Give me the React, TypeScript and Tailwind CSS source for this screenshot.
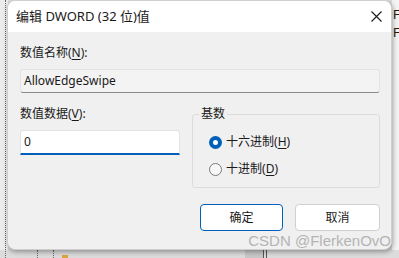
const font = { fontFamily: '"Noto Sans", "Noto Sans CJK SC", sans-serif' };

function Radio({ checked, label, hotkey }: { checked: boolean; label: string; hotkey: string }) {
  return (
    <div className="flex items-center gap-[4px] h-[16px]">
      {checked ? (
        <span className="flex h-[13px] w-[13px] items-center justify-center rounded-full bg-[#005fb8]">
          <span className="h-[5px] w-[5px] rounded-full bg-white" />
        </span>
      ) : (
        <span className="h-[13px] w-[13px] rounded-full border border-[#7a7a7a] bg-[#f7f7f7]" />
      )}
      <span className="text-[12px] leading-[16px] text-[#1a1a1a]">
        {label}(<span className="underline underline-offset-2">{hotkey}</span>)
      </span>
    </div>
  );
}

export default function App() {
  return (
    <div className="relative h-[258px] w-[399px] overflow-hidden bg-[#dcdcdc]" style={font}>
      {/* things behind the dialog */}
      <div className="absolute left-0 top-0 h-[250px] w-[8px] bg-[#ececec]" />
      <div className="absolute left-[5px] top-0 h-[258px] w-0 border-l border-dotted border-[#6a6a6a]" />
      <div className="absolute left-[37px] top-[250px] h-[8px] w-0 border-l border-dotted border-[#6a6a6a]" />
      <div className="absolute left-[53px] top-[250px] h-[8px] w-0 border-l border-dotted border-[#6a6a6a]" />
      <div className="absolute left-[62px] top-[255px] h-[3px] w-[6px] bg-[#d9a640]" />
      <div className="absolute left-[245px] top-[250px] h-[8px] w-[18px] bg-[#c8c8c8]" />
      <div className="absolute left-[263px] top-[250px] h-[8px] w-[1px] bg-[#555]" />
      <div className="absolute left-[266px] top-[250px] h-[8px] w-[1px] bg-[#555]" />
      <div className="absolute left-[392px] top-0 h-[250px] w-[7px] bg-[#f4f4f4]" />
      <div className="absolute left-[393px] top-[6px] text-[13px] leading-[18px] text-[#2a1a0a]" style={{ fontFamily: '"Liberation Sans", sans-serif' }}>
        <div>F</div>
        <div>F</div>
      </div>

      {/* dialog */}
      <div className="relative ml-[7px] flex h-[250px] w-[385px] flex-col overflow-hidden rounded-lg border border-[#cfcfcf] bg-[#f0f0f0] shadow-[1px_2px_5px_rgba(0,0,0,0.35)]">
        <div className="flex h-[31px] items-center justify-between bg-white pl-[8px] pr-[10px]">
          <span className="text-[13px] text-[#1a1a1a]">编辑 DWORD (32 位)值</span>
          <svg width="11" height="11" viewBox="0 0 11 11" className="mr-[-1px]">
            <path d="M0.5 0.5 L10.5 10.5 M10.5 0.5 L0.5 10.5" stroke="#1a1a1a" strokeWidth="1.1" />
          </svg>
        </div>

        <div className="flex flex-1 flex-col pl-[12px] pr-[11px] pt-[13px]">
          <div className="text-[12px] leading-[16px] text-[#1a1a1a]">
            数值名称(<span className="underline underline-offset-2">N</span>):
          </div>
          <div className="mt-[8px] flex h-[24px] items-center rounded-[3px] border border-[#e3e3e3] border-b-[#8a8a8a] bg-[#f3f3f3] pl-[3px] text-[12px] text-[#1a1a1a]">
            AllowEdgeSwipe
          </div>

          <div className="mt-[13px] flex gap-[12px]">
            <div className="w-[161px]">
              <div className="text-[12px] leading-[16px] text-[#1a1a1a]">
                数值数据(<span className="underline underline-offset-2">V</span>):
              </div>
              <div className="mt-[8px] flex h-[25px] items-center rounded-t-[3px] border border-[#e3e3e3] border-b-2 border-b-[#005fb8] bg-white pl-[3px] text-[12px] text-[#1a1a1a]">
                0
              </div>
            </div>
            <fieldset className="h-[82px] w-[189px] rounded-[3px] border border-[#dcdcdc] pl-[6px] pt-[12px]">
              <legend className="px-[2px] text-[12px] leading-[16px] text-[#1a1a1a]">基数</legend>
              <div className="flex flex-col gap-[11px] pl-[10px]">
                <Radio checked label="十六进制" hotkey="H" />
                <Radio checked={false} label="十进制" hotkey="D" />
              </div>
            </fieldset>
          </div>

          <div className="mt-[16px] flex justify-end gap-[12px]">
            <button className="h-[27px] w-[83px] rounded-[4px] border border-[#005fb8] bg-white text-[12px] text-[#1a1a1a]">
              确定
            </button>
            <button className="h-[27px] w-[85px] rounded-[4px] border border-[#d0d0d0] bg-white text-[12px] text-[#1a1a1a]">
              取消
            </button>
          </div>
        </div>

        <div
          className="absolute bottom-[0px] right-[0px] text-[15px] leading-[17px] text-[#b4b4b4]"
          style={{ fontFamily: '"Liberation Sans", sans-serif' }}
        >
          CSDN @FlerkenOvO
        </div>
      </div>
    </div>
  );
}
